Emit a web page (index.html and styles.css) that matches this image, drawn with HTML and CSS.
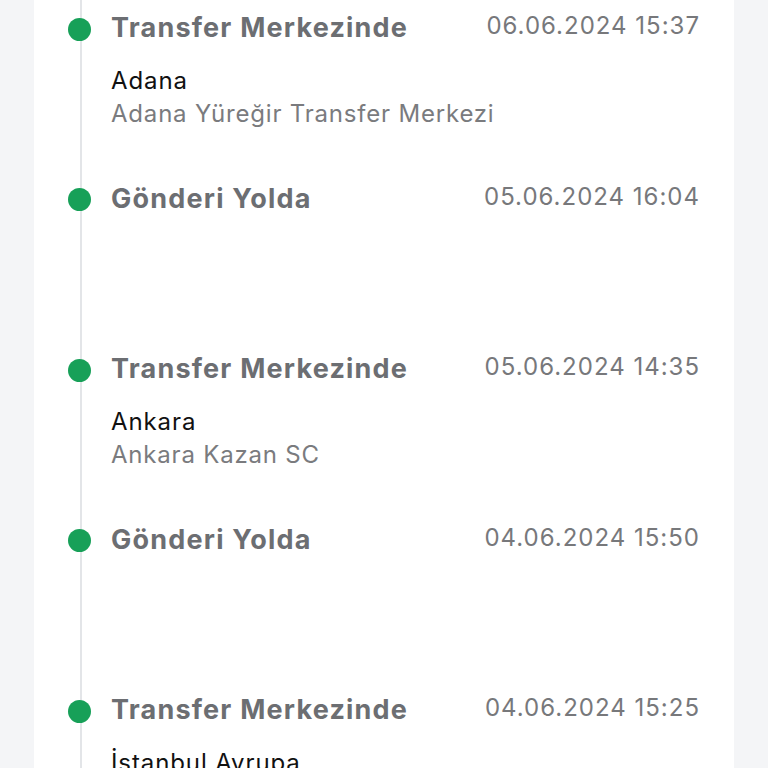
FILE: index.html
```html
<!DOCTYPE html>
<html lang="tr">
<head>
    <meta charset="UTF-8">
    <meta name="viewport" content="width=device-width, initial-scale=1.0">
    <title>Gönderi Takibi</title>
    <link rel="stylesheet" href="styles.css">
</head>
<body>
    <div class="card">
        <ul class="timeline">
            <li class="event">
                <span class="dot"></span>
                <div class="event-head">
                    <span class="status">Transfer Merkezinde</span>
                    <span class="time">06.06.2024 15:37</span>
                </div>
                <div class="place">Adana</div>
                <div class="branch">Adana Yüreğir Transfer Merkezi</div>
            </li>
            <li class="event">
                <span class="dot"></span>
                <div class="event-head">
                    <span class="status">Gönderi Yolda</span>
                    <span class="time">05.06.2024 16:04</span>
                </div>
            </li>
            <li class="event">
                <span class="dot"></span>
                <div class="event-head">
                    <span class="status">Transfer Merkezinde</span>
                    <span class="time">05.06.2024 14:35</span>
                </div>
                <div class="place">Ankara</div>
                <div class="branch">Ankara Kazan SC</div>
            </li>
            <li class="event">
                <span class="dot"></span>
                <div class="event-head">
                    <span class="status">Gönderi Yolda</span>
                    <span class="time">04.06.2024 15:50</span>
                </div>
            </li>
            <li class="event">
                <span class="dot"></span>
                <div class="event-head">
                    <span class="status">Transfer Merkezinde</span>
                    <span class="time">04.06.2024 15:25</span>
                </div>
                <div class="place">İstanbul Avrupa</div>
                <div class="branch">İstanbul Avrupa Transfer Merkezi</div>
            </li>
        </ul>
    </div>
</body>
</html>
```

FILE: styles.css
```css
* {
    margin: 0;
    padding: 0;
    box-sizing: border-box;
}
body {
    background: #f4f5f7;
    font-family: 'Inter', 'Noto Sans', sans-serif;
    height: 768px;
    overflow: hidden;
}
.card {
    background: #fff;
    margin: 0 34px;
    min-height: 768px;
    padding: 0 34px 0 77px;
}
.timeline {
    list-style: none;
    position: relative;
}
.timeline::before {
    content: '';
    position: absolute;
    left: -31px;
    top: 0;
    bottom: 0;
    width: 2px;
    background: #e3e5e8;
}
.event {
    position: relative;
    height: 170.5px;
    padding-top: 12px;
}
.dot {
    position: absolute;
    left: -43px;
    top: 17.5px;
    width: 23px;
    height: 23px;
    border-radius: 50%;
    background: #17a058;
}
.event-head {
    display: flex;
    justify-content: space-between;
    align-items: flex-start;
}
.status {
    font-size: 27px;
    line-height: 32px;
    font-weight: 700;
    letter-spacing: 1.2px;
    color: #6c6e72;
}
.time {
    font-size: 24px;
    line-height: 32px;
    letter-spacing: 1px;
    color: #77787b;
    margin-top: -2px;
}
.place {
    margin-top: 20px;
    font-size: 24px;
    line-height: 33px;
    letter-spacing: 0.9px;
    color: #111;
}
.branch {
    font-size: 24px;
    line-height: 33px;
    letter-spacing: 0.8px;
    color: #7a7b7e;
}
```
